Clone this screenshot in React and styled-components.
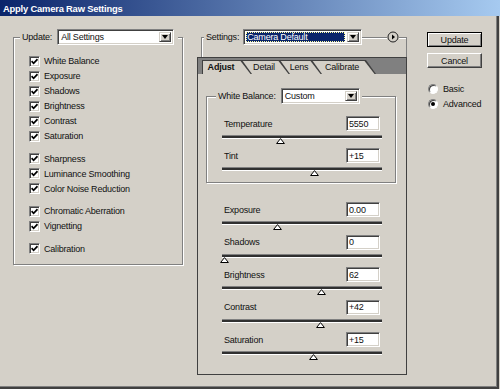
import React from 'react';
import styled, { createGlobalStyle } from 'styled-components';

const GlobalStyle = createGlobalStyle`
  html, body { margin:0; padding:0; background:#d4d0c8; }
  body {
    font-family:"Liberation Sans", Arial, sans-serif;
    font-size:9px;
    letter-spacing:-0.2px;
    color:#111;
  }
  * { box-sizing:border-box; }
`;

const checkGroups = [
  ['White Balance', 'Exposure', 'Shadows', 'Brightness', 'Contrast', 'Saturation'],
  ['Sharpness', 'Luminance Smoothing', 'Color Noise Reduction'],
  ['Chromatic Aberration', 'Vignetting'],
  ['Calibration'],
];

const tabs = [
  { label: 'Adjust', w: 50, active: true },
  { label: 'Detail', w: 48 },
  { label: 'Lens', w: 42 },
  { label: 'Calibrate', w: 64 },
];

const wbSliders = [
  { label: 'Temperature', value: '5550', pos: 58 },
  { label: 'Tint', value: '+15', pos: 92 },
];

const toneSliders = [
  { label: 'Exposure', value: '0.00', pos: 55 },
  { label: 'Shadows', value: '0', pos: 2 },
  { label: 'Brightness', value: '62', pos: 99 },
  { label: 'Contrast', value: '+42', pos: 98 },
  { label: 'Saturation', value: '+15', pos: 91 },
];

const Window = styled.div`
  width:500px;
  height:389px;
  display:flex;
  flex-direction:column;
`;

const TitleBar = styled.div`
  height:16px;
  padding-left:3px;
  display:flex;
  align-items:center;
  background:linear-gradient(to right, #0a246a, #a6caf0);
  color:#fff;
  font-weight:700;
  font-size:9.4px;
`;

const Content = styled.div`
  flex:1;
  width:499px;
  display:flex;
  align-items:flex-start;
  padding:13px 0 0 13px;
  border-right:2px solid #404040;
  border-bottom:2px solid #404040;
  box-shadow:inset -1px -1px 0 #808080;
`;

const Group = styled.fieldset`
  margin:0;
  padding:0;
  min-width:0;
  border:1px solid #808080;
  box-shadow:inset 1px 1px 0 #fff, 1px 1px 0 #fff;
`;

const Legend = styled.legend`
  margin-left:${p => p.$indent}px;
  padding:0 ${p => p.$pr}px 0 2px;
  height:16px;
  display:flex;
  align-items:center;
  background:#d4d0c8;
`;

const UpdateGroup = styled(Group)`
  width:170px;
`;

const CheckList = styled.div`
  padding:8.5px 0 8px 15px;
  display:flex;
  flex-direction:column;
  gap:7.5px;
`;

const CheckGroup = styled.div`
  display:flex;
  flex-direction:column;
`;

const CheckRow = styled.label`
  height:15px;
  display:flex;
  align-items:center;
  gap:4px;
`;

const Box = styled.span`
  width:11px;
  height:11px;
  display:flex;
  align-items:center;
  justify-content:center;
  background:#fff;
  border:1px solid;
  border-color:#808080 #fff #fff #808080;
  box-shadow:inset 1px 1px 0 #404040, inset -1px -1px 0 #d4d0c8;
`;

const Select = styled.div`
  width:${p => p.$w}px;
  height:16px;
  margin-left:${p => p.$gap}px;
  display:flex;
  padding:2px;
  background:#fff;
  border:1px solid;
  border-color:#808080 #fff #fff #808080;
  box-shadow:inset 1px 1px 0 #404040, inset -1px -1px 0 #d4d0c8;
`;

const SelectValue = styled.span`
  flex:1;
  display:flex;
  align-items:center;
  padding-left:1px;
  margin-right:2px;
  white-space:nowrap;
  background:${p => (p.$focused ? '#0a246a' : 'transparent')};
  color:${p => (p.$focused ? '#fff' : 'inherit')};
  outline:${p => (p.$focused ? '1px dotted #ffffa0' : 'none')};
  outline-offset:-1px;
`;

const DropButton = styled.span`
  width:12px;
  display:flex;
  align-items:center;
  justify-content:center;
  background:#d4d0c8;
  border:1px solid;
  border-color:#d4d0c8 #404040 #404040 #d4d0c8;
  box-shadow:inset 1px 1px 0 #fff, inset -1px -1px 0 #808080;
  &::after {
    content:'';
    border-top:4px solid #000;
    border-left:3.5px solid transparent;
    border-right:3.5px solid transparent;
  }
`;

const Middle = styled.div`
  width:210px;
  margin-left:14px;
  display:flex;
  flex-direction:column;
`;

const SettingsGroup = styled(Group)`
  margin-left:4px;
  border-bottom:none;
  box-shadow:inset 1px 1px 0 #fff;
`;

const SettingsSpacer = styled.div`
  height:12px;
`;

const Connector = styled.span`
  width:25px;
  height:2px;
  align-self:flex-start;
  margin-top:8px;
  border-top:1px solid #808080;
  border-bottom:1px solid #fff;
`;

const Panel = styled.div`
  height:318px;
  border:1px solid #404040;
  display:flex;
  flex-direction:column;
`;

const TabStrip = styled.div`
  height:16px;
  padding:2px 0 0 4px;
  display:flex;
  background:#808080;
`;

const Tab = styled.div`
  position:relative;
  z-index:${p => p.$z};
  width:${p => p.$w}px;
  height:14px;
  margin-left:${p => (p.$first ? 0 : -10)}px;
  padding:${p => (p.$first ? '0 12px 0 0' : '0 12px 0 8px')};
  display:flex;
  align-items:center;
  justify-content:center;
  font-weight:${p => (p.$active ? 700 : 400)};
  background:#404040;
  clip-path:polygon(0 0, calc(100% - 10px) 0, 100% 100%, 0 100%);
  &::before {
    content:'';
    position:absolute;
    top:1px;
    bottom:0;
    left:${p => (p.$active ? 1 : 0)}px;
    right:1.5px;
    background:#d4d0c8;
    clip-path:polygon(0 0, calc(100% - 10px) 0, 100% 100%, 0 100%);
  }
  span { position:relative; }
`;

const PanelBody = styled.div`
  padding:14px 10px 0 8px;
`;

const BalanceGroup = styled(Group)``;

const SliderStack = styled.div`
  padding:${p => p.$pad};
  display:flex;
  flex-direction:column;
`;

const SliderBlock = styled.div`
  height:${p => p.$h}px;
`;

const SliderHead = styled.div`
  height:15px;
  padding:0 2px;
  display:flex;
  align-items:center;
  justify-content:space-between;
`;

const ValueInput = styled.div`
  width:34px;
  height:15px;
  padding:0 2px;
  display:flex;
  align-items:center;
  background:#fff;
  border:1px solid;
  border-color:#808080 #fff #fff #808080;
  box-shadow:inset 1px 1px 0 #404040, inset -1px -1px 0 #d4d0c8;
`;

const Track = styled.div`
  position:relative;
  margin-top:4px;
  height:4px;
  background:#303030;
  border-top:1px solid #808080;
  border-bottom:1px solid #fff;
`;

const Thumb = styled.svg`
  position:absolute;
  top:100%;
  display:block;
`;

const Side = styled.div`
  width:55px;
  margin-left:20px;
  padding-top:3px;
  display:flex;
  flex-direction:column;
`;

const Button = styled.button`
  width:55px;
  height:15px;
  margin-bottom:6px;
  padding:0;
  font:inherit;
  letter-spacing:inherit;
  color:inherit;
  background:#d4d0c8;
  border:1px solid;
  border-color:${p => (p.$default ? '#000' : '#fff #404040 #404040 #fff')};
  box-shadow:${p => (p.$default
    ? 'inset 1px 1px 0 #fff, inset -1px -1px 0 #808080'
    : 'inset -1px -1px 0 #808080')};
`;

const RadioList = styled.div`
  margin-top:7.5px;
  display:flex;
  flex-direction:column;
`;

const RadioRow = styled.label`
  height:15px;
  display:flex;
  align-items:center;
  gap:5px;
  padding-left:1px;
`;

const RadioDot = styled.span`
  position:relative;
  width:10px;
  height:10px;
  border-radius:50%;
  background:#fff;
  border:1px solid;
  border-color:#808080 #fff #fff #808080;
  box-shadow:inset 1px 1px 0 #404040;
  &::after {
    content:'';
    display:${p => (p.$on ? 'block' : 'none')};
    position:absolute;
    left:2px;
    top:2px;
    width:4px;
    height:4px;
    border-radius:50%;
    background:#000;
  }
`;

function Check() {
  return (
    <svg width="7" height="7" viewBox="0 0 7 7">
      <path d="M0.6 3.2 L2.6 5.3 L6.5 1.2" fill="none" stroke="#000" strokeWidth="1.7" />
    </svg>
  );
}

function Dropdown({ w, gap = 0, value, focused }) {
  return (
    <Select $w={w} $gap={gap}>
      <SelectValue $focused={focused}>{value}</SelectValue>
      <DropButton />
    </Select>
  );
}

function Slider({ label, value, pos, h }) {
  return (
    <SliderBlock $h={h}>
      <SliderHead>
        <span>{label}</span>
        <ValueInput>{value}</ValueInput>
      </SliderHead>
      <Track>
        <Thumb width="9" height="6" viewBox="0 0 9 6" style={{ left: pos - 4.5 }}>
          <polygon points="4.5,0.6 8.4,5.5 0.6,5.5" fill="#fff" stroke="#000" strokeWidth="1" />
        </Thumb>
      </Track>
    </SliderBlock>
  );
}

export default function App() {
  return (
    <>
      <GlobalStyle />
      <Window>
        <TitleBar>Apply Camera Raw Settings</TitleBar>
        <Content>
          <UpdateGroup>
            <Legend $indent={6} $pr={4}>
              <span>Update:</span>
              <Dropdown w={117} gap={5} value="All Settings" />
            </Legend>
            <CheckList>
              {checkGroups.map((group, i) => (
                <CheckGroup key={i}>
                  {group.map(name => (
                    <CheckRow key={name}>
                      <Box><Check /></Box>
                      {name}
                    </CheckRow>
                  ))}
                </CheckGroup>
              ))}
            </CheckList>
          </UpdateGroup>

          <Middle>
            <SettingsGroup>
              <Legend $indent={2} $pr={0}>
                <span>Settings:</span>
                <Dropdown w={119} gap={4} value="Camera Default" focused />
                <Connector />
                <svg width="12" height="12" viewBox="0 0 12 12">
                  <circle cx="6" cy="6" r="5" fill="#d4d0c8" stroke="#202020" strokeWidth="1" />
                  <polygon points="5,3.5 8,6 5,8.5" fill="#000" />
                </svg>
              </Legend>
              <SettingsSpacer />
            </SettingsGroup>
            <Panel>
              <TabStrip>
                {tabs.map((t, i) => (
                  <Tab key={t.label} $w={t.w} $z={tabs.length - i} $first={i === 0} $active={t.active}>
                    <span>{t.label}</span>
                  </Tab>
                ))}
              </TabStrip>
              <PanelBody>
                <BalanceGroup>
                  <Legend $indent={9} $pr={2}>
                    <span>White Balance:</span>
                    <Dropdown w={79} gap={5} value="Custom" />
                  </Legend>
                  <SliderStack $pad="12px 13px 2px 15px">
                    {wbSliders.map(s => <Slider key={s.label} {...s} h={32} />)}
                  </SliderStack>
                </BalanceGroup>
                <SliderStack $pad="19px 14px 0 16px">
                  {toneSliders.map(s => <Slider key={s.label} {...s} h={32.5} />)}
                </SliderStack>
              </PanelBody>
            </Panel>
          </Middle>

          <Side>
            <Button $default>Update</Button>
            <Button>Cancel</Button>
            <RadioList>
              <RadioRow><RadioDot />Basic</RadioRow>
              <RadioRow><RadioDot $on />Advanced</RadioRow>
            </RadioList>
          </Side>
        </Content>
      </Window>
    </>
  );
}
